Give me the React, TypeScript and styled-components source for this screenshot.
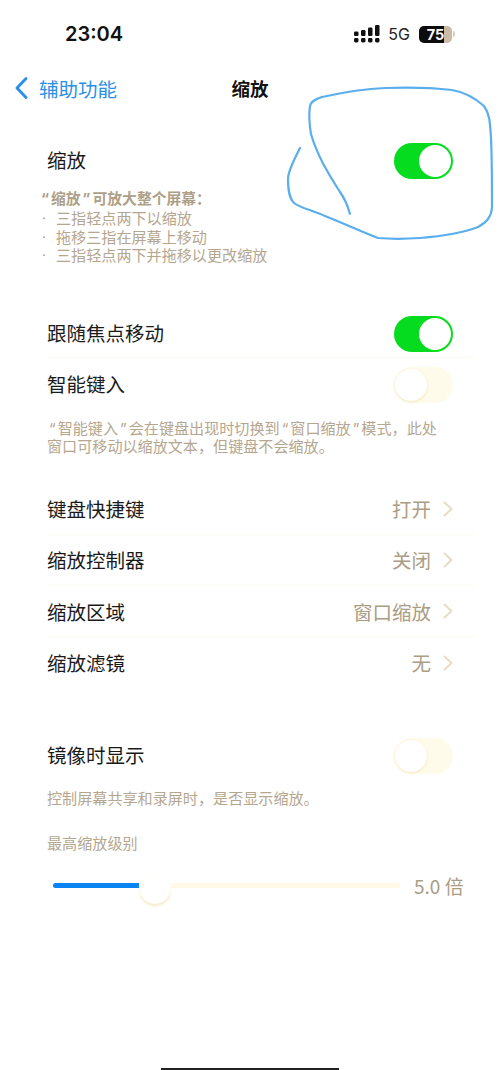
import React from 'react';
import styled, { createGlobalStyle } from 'styled-components';

const GlobalStyle = createGlobalStyle`
  html, body {
    margin: 0;
    padding: 0;
    background: #ffffff;
  }
  body {
    font-family: 'Noto Sans CJK SC', 'Noto Sans', sans-serif;
  }
`;

const Page = styled.div`
  position: relative;
  display: flex;
  flex-direction: column;
  width: 500px;
  height: 1070px;
  overflow: hidden;
  background: #ffffff;
  color: #151515;
`;

const StatusBar = styled.div`
  display: flex;
  align-items: center;
  justify-content: space-between;
  height: 68px;
  padding: 0 45px 0 65px;
  flex-shrink: 0;
`;

const Time = styled.div`
  font-family: 'Inter', 'Liberation Sans', sans-serif;
  font-size: 20px;
  font-weight: 600;
  color: #111111;
`;

const StatusIcons = styled.div`
  display: flex;
  align-items: center;
`;

const NetworkLabel = styled.div`
  margin-left: 8px;
  font-family: 'Inter', 'Liberation Sans', sans-serif;
  font-size: 16px;
  color: #222222;
`;

const Battery = styled.div<{ $level: number }>`
  display: flex;
  align-items: center;
  justify-content: center;
  width: 33px;
  height: 17px;
  margin-left: 9px;
  border-radius: 5px;
  background: linear-gradient(
    to right,
    #0c0c0c ${(p) => p.$level}%,
    #c9bba6 ${(p) => p.$level}%
  );
  color: #ffffff;
  font-family: 'Inter', 'Liberation Sans', sans-serif;
  font-size: 14.5px;
  font-weight: 700;
`;

const BatteryCap = styled.div`
  width: 2px;
  height: 6px;
  margin-left: 1px;
  border-radius: 0 2px 2px 0;
  background: #d8cdbb;
`;

const NavBar = styled.div`
  position: relative;
  display: flex;
  align-items: center;
  justify-content: center;
  height: 40px;
  flex-shrink: 0;
`;

const BackLink = styled.div`
  position: absolute;
  left: 15px;
  top: 0;
  bottom: 0;
  display: flex;
  align-items: center;
  gap: 11px;
  color: #2a8fe8;
  font-size: 19.5px;
`;

const NavTitle = styled.div`
  font-size: 18.5px;
  font-weight: 700;
  color: #111111;
`;

const Section = styled.div<{ $top: number }>`
  margin-top: ${(p) => p.$top}px;
`;

const Row = styled.div<{ $divider?: boolean }>`
  display: flex;
  align-items: center;
  justify-content: space-between;
  height: 51.3px;
  box-sizing: border-box;
  margin: 0 24px 0 47px;
  padding-right: 23px;
  font-size: 19.5px;
  color: #1a1a1a;
  border-bottom: 1px solid ${(p) => (p.$divider ? '#fdfaf0' : 'transparent')};
`;

const Toggle = styled.div<{ $on?: boolean }>`
  position: relative;
  width: 59px;
  height: 36px;
  margin-top: 3px;
  box-sizing: border-box;
  border-radius: 18px;
  background: ${(p) => (p.$on ? '#05dc1f' : '#fffbea')};
`;

const Knob = styled.div<{ $on?: boolean }>`
  position: absolute;
  top: 2px;
  left: ${(p) => (p.$on ? '25px' : '1px')};
  width: 32px;
  height: 32px;
  border-radius: 50%;
  background: #ffffff;
  box-shadow: ${(p) => (p.$on ? 'none' : '0 1px 3px rgba(238, 222, 170, 0.7)')};
`;

const Note = styled.div<{ $top?: number }>`
  margin: ${(p) => p.$top ?? 0}px 20px 0 47px;
  font-size: 15.1px;
  line-height: 18.7px;
  color: #b5a78f;
`;

const NoteHeading = styled.div`
  margin-left: -8px;
  font-weight: 700;
  font-size: 14.8px;
  color: #ae9f88;
`;

const Quote = styled.span`
  padding: 0 2px;
  line-height: 0;
  font-family: 'Inter', 'Liberation Sans', sans-serif;
`;

const BulletLine = styled.div`
  display: flex;
  margin-left: -7px;
`;

const Bullet = styled.span`
  width: 16px;
  padding-left: 1.5px;
  box-sizing: border-box;
  font-family: 'Liberation Sans', sans-serif;
  color: #a4988a;
`;

const Value = styled.div`
  display: flex;
  align-items: center;
  gap: 12px;
  color: #ab9d84;
  font-size: 19.5px;
`;

const SliderRow = styled.div`
  display: flex;
  align-items: center;
  height: 40px;
  margin: 14px 36px 0 53px;
`;

const SliderFill = styled.div<{ $width: number }>`
  width: ${(p) => p.$width}px;
  height: 5px;
  border-radius: 3px 0 0 3px;
  background: #0b84f3;
`;

const SliderThumb = styled.div`
  width: 30px;
  height: 30px;
  margin: 6px 1px 0;
  border-radius: 50%;
  background: #ffffff;
  box-shadow: 0 2px 3px rgba(240, 225, 170, 0.7);
`;

const SliderTrack = styled.div`
  width: 229px;
  height: 5px;
  border-radius: 0 3px 3px 0;
  background: #fff9e6;
`;

const SliderValue = styled.div`
  margin-left: 14px;
  white-space: nowrap;
  font-size: 19px;
  color: #ab9d84;
`;

const HomeBar = styled.div`
  width: 178px;
  height: 2px;
  margin: auto auto 0;
  background: #222222;
`;

const Scribble = styled.svg`
  position: absolute;
  left: 0;
  top: 0;
  pointer-events: none;
`;

const SignalIcon = () => (
  <svg width="26" height="18" viewBox="0 0 26 18" fill="#111111">
    <rect x="0" y="6.5" width="4.5" height="4.5" rx="1.2" />
    <rect x="7" y="5" width="4.5" height="6" rx="1.2" />
    <rect x="14" y="2.5" width="4.5" height="8.5" rx="1.2" />
    <rect x="21" y="0" width="4.5" height="11" rx="1.2" />
    <rect x="0" y="13" width="4.5" height="4.5" rx="1.4" />
    <rect x="7" y="13" width="4.5" height="4.5" rx="1.4" />
    <rect x="14" y="13" width="4.5" height="4.5" rx="1.4" />
    <rect x="21" y="13" width="4.5" height="4.5" rx="1.4" />
  </svg>
);

const Chevron = () => (
  <svg width="10" height="16" viewBox="0 0 10 16" fill="none">
    <path d="M1.5 1.5 L8.5 8 L1.5 14.5" stroke="#e9dcc2" strokeWidth="2" strokeLinecap="round" strokeLinejoin="round" />
  </svg>
);

const BackChevron = () => (
  <svg width="13" height="22" viewBox="0 0 13 22" fill="none">
    <path d="M11 1.5 L2 11 L11 20.5" stroke="#2a8fe8" strokeWidth="2.8" strokeLinecap="round" strokeLinejoin="round" />
  </svg>
);

const Switch = ({ on }: { on?: boolean }) => (
  <Toggle $on={on}>
    <Knob $on={on} />
  </Toggle>
);

const gestures = ['三指轻点两下以缩放', '拖移三指在屏幕上移动', '三指轻点两下并拖移以更改缩放'];

const links = [
  { label: '键盘快捷键', value: '打开' },
  { label: '缩放控制器', value: '关闭' },
  { label: '缩放区域', value: '窗口缩放' },
  { label: '缩放滤镜', value: '无' },
];

const App: React.FC = () => {
  return (
    <Page>
      <GlobalStyle />
      <StatusBar>
        <Time>23:04</Time>
        <StatusIcons>
          <SignalIcon />
          <NetworkLabel>5G</NetworkLabel>
          <Battery $level={76}>75</Battery>
          <BatteryCap />
        </StatusIcons>
      </StatusBar>

      <NavBar>
        <BackLink>
          <BackChevron />
          辅助功能
        </BackLink>
        <NavTitle>缩放</NavTitle>
      </NavBar>

      <Section $top={26}>
        <Row>
          缩放
          <Switch on />
        </Row>
        <Note $top={4}>
          <NoteHeading>
            <Quote>“</Quote>缩放<Quote>”</Quote>可放大整个屏幕&#xFF1A;
          </NoteHeading>
          {gestures.map((text) => (
            <BulletLine key={text}>
              <Bullet>·</Bullet>
              {text}
            </BulletLine>
          ))}
        </Note>
      </Section>

      <Section $top={43}>
        <Row $divider>
          跟随焦点移动
          <Switch on />
        </Row>
        <Row>
          智能键入
          <Switch />
        </Row>
        <Note $top={8}>
          <Quote>“</Quote>智能键入<Quote>”</Quote>会在键盘出现时切换到<Quote>“</Quote>窗口缩放<Quote>”</Quote>模式&#xFF0C;此处
          <br />
          窗口可移动以缩放文本&#xFF0C;但键盘不会缩放。
        </Note>
      </Section>

      <Section $top={28.4}>
        {links.map((link, i) => (
          <Row key={link.label} $divider={i < links.length - 1}>
            {link.label}
            <Value>
              {link.value}
              <Chevron />
            </Value>
          </Row>
        ))}
      </Section>

      <Section $top={40.6}>
        <Row>
          镜像时显示
          <Switch />
        </Row>
        <Note $top={7}>控制屏幕共享和录屏时&#xFF0C;是否显示缩放。</Note>
        <Note $top={27}>最高缩放级别</Note>
        <SliderRow>
          <SliderFill $width={86} />
          <SliderThumb />
          <SliderTrack />
          <SliderValue>5.0 倍</SliderValue>
        </SliderRow>
      </Section>

      <HomeBar />

      <Scribble width="500" height="1070" viewBox="0 0 500 1070" fill="none">
        <path
          d="M350 214 C347 203 345 199 340 192 C330 176 318 158 311 134 C309 122 309 112 310 106 C311 101 316 99 322 97 C340 93 360 89 385 88 C410 87 435 88 452 90 C464 92 475 98 484 106 C490 114 490 124 491 138 C492 160 492 190 492 208 C491 217 487 222 478 227 C465 232 445 236 420 238 C405 239 390 239 378 238 C365 233 345 224 325 216 C312 210 300 208 294 203 C289 198 288 190 288 178 C289 170 292 165 295 158 C297 154 299 150 300 148"
          stroke="#5aaeec"
          strokeWidth="2.2"
          strokeLinecap="round"
          strokeLinejoin="round"
        />
      </Scribble>
    </Page>
  );
};

export default App;
